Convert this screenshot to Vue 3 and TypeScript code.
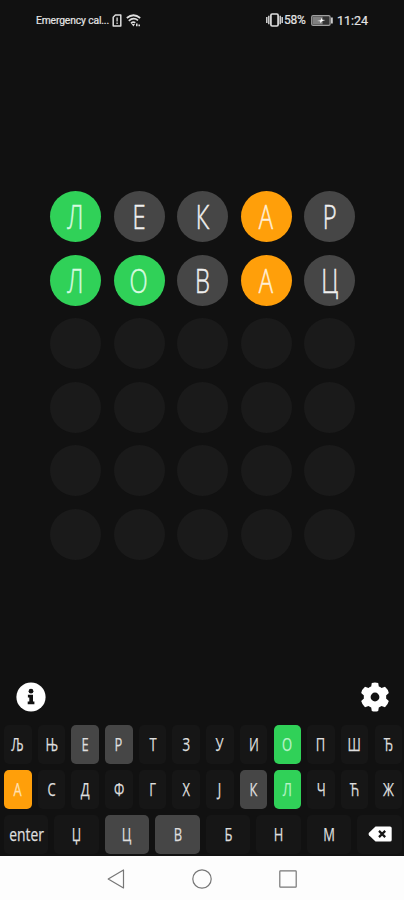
<script setup lang="ts">
type State = 'hit' | 'near' | 'miss' | 'idle'
interface Cell { ch: string; state: State }

const parse = (letters: string, marks: string): Cell[] => {
  const map: Record<string, State> = { g: 'hit', o: 'near', x: 'miss', '.': 'idle' }
  return [...letters].map((ch, i) => ({ ch: ch.trim(), state: map[marks[i]] }))
}

const board: Cell[][] = [
  parse('ЛЕКАР', 'gxxox'),
  parse('ЛОВАЦ', 'ggxox'),
  ...Array.from({ length: 4 }, () => parse('     ', '.....')),
]

const topKeys: Cell[][] = [
  parse('ЉЊЕРТЗУИОПШЂ', '..xx....g...'),
  parse('АСДФГХЈКЛЧЋЖ', 'o......xg...'),
]
const bottomKeys: Cell[] = parse('ЏЦВБНМ', '.xx...')
</script>

<template>
  <div class="phone">
    <header class="status">
      <div class="carrier">
        <span class="carrier-name">Emergency cal...</span>
        <svg class="sim" width="10" height="13" viewBox="0 0 10 13">
          <path d="M3.4 1H8.8V12H1.2V3.2Z" fill="none" stroke="#ddd" stroke-width="1.5" stroke-linejoin="round" />
          <path d="M5.1 3.6V7.4M5.1 8.6V10" stroke="#ddd" stroke-width="1.3" />
        </svg>
        <svg class="wifi" width="15" height="13" viewBox="0 0 15 13">
          <g fill="none" stroke="#ddd" stroke-width="1.7">
            <path d="M.8 4Q7.5-1.5 14.2 4" />
            <path d="M2.8 6.8Q7.5 2.8 12 6.4" />
            <path d="M5 9.3Q7.2 7.2 9.3 8.8" />
          </g>
          <path d="M5.6 10L7.4 12.4L9 10ZM10 9.4H11.6V12.3H10ZM12.4 10.4H14V12.3H12.4Z" fill="#ddd" />
        </svg>
      </div>
      <div class="system">
        <svg width="17" height="14" viewBox="0 0 17 14">
          <rect x="4.9" y="1" width="7.2" height="12" rx="1.2" fill="none" stroke="#ddd" stroke-width="1.7" />
          <path d="M2.8 2.8V11.2M14.2 2.8V11.2M.8 4V10M16.2 4V10" stroke="#ddd" stroke-width="1.4" />
        </svg>
        <span class="percent">58%</span>
        <svg class="battery" width="23" height="11" viewBox="0 0 23 11">
          <rect x=".7" y=".6" width="18.4" height="9.8" rx="1.4" fill="#333" stroke="#a0a0a0" stroke-width="1.2" />
          <rect x="1.6" y="1.6" width="10" height="7.8" fill="#808080" />
          <path d="M6 6.1L9.6 5.2L10.6 2.8L11.3 4.8L14.4 5L10.9 6.2L9.6 8.3L9.1 6.3Z" fill="#fff" />
          <path d="M20.9 2.4V8.6" stroke="#ccc" stroke-width="1.8" />
        </svg>
        <span class="clock">11:24</span>
      </div>
    </header>

    <main class="board">
      <template v-for="(row, r) in board" :key="r">
        <div v-for="(cell, c) in row" :key="c" class="tile" :class="cell.state">
          <span v-if="cell.ch" class="narrow">{{ cell.ch }}</span>
        </div>
      </template>
    </main>

    <div class="tools">
      <svg width="30" height="30" viewBox="0 0 30 30">
        <circle cx="15" cy="15" r="14.6" fill="#fff" />
        <circle cx="15" cy="9.2" r="2.4" fill="#111" />
        <path d="M11.9 12.8H17V19.4H18.4V22.2H11.7V19.4H13.3V15.5H11.9Z" fill="#111" />
      </svg>
      <svg width="30" height="30" viewBox="0 0 30 30">
        <path
          fill="#fff"
          fill-rule="evenodd"
          d="M11.8.9Q15-.1 18.2.9L18.8 4.6Q20.3 5.1 21.5 6L25 4.8Q28 7.3 28.8 10.9L26.1 13.4Q26.3 15 26.1 16.6L28.8 19.1Q28 22.7 25 25.2L21.5 24Q20.3 24.9 18.8 25.4L18.2 29.1Q15 30.1 11.8 29.1L11.2 25.4Q9.7 24.9 8.5 24L5 25.2Q2 22.7 1.2 19.1L3.9 16.6Q3.7 15 3.9 13.4L1.2 10.9Q2 7.3 5 4.8L8.5 6Q9.7 5.1 11.2 4.6ZM15 10.6A4.4 4.4 0 1 0 15 19.4A4.4 4.4 0 1 0 15 10.6Z"
        />
      </svg>
    </div>

    <section class="keyboard">
      <div v-for="(row, r) in topKeys" :key="r" class="keys twelve">
        <button v-for="key in row" :key="key.ch" class="key" :class="key.state">
          <span class="narrow">{{ key.ch }}</span>
        </button>
      </div>
      <div class="keys eight">
        <button class="key idle enter"><span class="narrow">enter</span></button>
        <button v-for="key in bottomKeys" :key="key.ch" class="key" :class="key.state">
          <span class="narrow">{{ key.ch }}</span>
        </button>
        <button class="key idle">
          <svg width="24" height="16" viewBox="0 0 24 16">
            <path d="M7.5.4H22Q23.7.4 23.7 2V14Q23.7 15.6 22 15.6H7.5L1 9.2Q0 8 1 6.8Z" fill="#fff" />
            <path d="M11 4.9L17.2 11.1M17.2 4.9L11 11.1" stroke="#151515" stroke-width="2.2" />
          </svg>
        </button>
      </div>
    </section>

    <nav class="navbar">
      <svg width="18" height="20" viewBox="0 0 18 20">
        <path d="M1.2 10L16.5 1V19Z" fill="none" stroke="#777" stroke-width="1.2" stroke-linejoin="round" />
      </svg>
      <svg width="20" height="20" viewBox="0 0 20 20">
        <circle cx="10" cy="10" r="9.2" fill="none" stroke="#777" stroke-width="1.2" />
      </svg>
      <svg width="18" height="18" viewBox="0 0 18 18">
        <rect x=".8" y=".8" width="16.4" height="16.4" rx=".6" fill="none" stroke="#777" stroke-width="1.2" />
      </svg>
    </nav>
  </div>
</template>

<style>
body {
  background: #111;
}
</style>

<style scoped>
.phone {
  width: 404px;
  height: 900px;
  display: flex;
  flex-direction: column;
  background: #111;
  color: #f0f0f0;
  overflow: hidden;
  font-family: 'Open Sans', 'Noto Sans', sans-serif;
}
.status {
  height: 40px;
  box-sizing: border-box;
  padding: 0 35px 0 36px;
  display: flex;
  align-items: center;
  justify-content: space-between;
  color: #e4e4e4;
  font-family: Roboto, sans-serif;
  white-space: nowrap;
}
.carrier,
.system {
  display: flex;
  align-items: center;
}
.carrier-name {
  width: 73px;
  font-size: 10.3px;
  letter-spacing: -0.13px;
  -webkit-text-stroke: 0.2px currentColor;
}
.sim {
  margin-left: 3px;
}
.wifi {
  margin-left: 4px;
}
.percent {
  margin-left: 1px;
  width: 24px;
  font-size: 12px;
  letter-spacing: -0.2px;
  -webkit-text-stroke: 0.2px currentColor;
}
.battery {
  margin-left: 3px;
}
.clock {
  margin-left: 3px;
  width: 32px;
  font-size: 12.5px;
  -webkit-text-stroke: 0.2px currentColor;
}
.board {
  display: grid;
  grid-template-columns: repeat(5, 51px);
  grid-auto-rows: 51px;
  gap: 12.5px;
  justify-content: center;
  padding-left: 1px;
  margin-top: 151.3px;
}
.tile {
  border-radius: 50%;
  display: flex;
  align-items: center;
  justify-content: center;
  font-size: 33px;
  line-height: 51px;
  font-weight: 300;
  -webkit-text-stroke: 0.5px currentColor;
}
.narrow {
  display: inline-block;
  transform: scaleX(0.72);
}
.idle {
  background: #1a1a1a;
}
.miss {
  background: #464646;
}
.near {
  background: #ff9f0a;
}
.hit {
  background: #30d158;
}
.tools {
  display: flex;
  justify-content: space-between;
  padding: 0 14.5px 0 16px;
  margin-top: 122.7px;
  height: 30px;
}
.keyboard {
  display: grid;
  gap: 6px;
  padding: 0 2px 0 4px;
  margin-top: 12.5px;
}
.keys {
  display: grid;
  gap: 6.2px;
}
.twelve {
  grid-template-columns: repeat(12, 27.5px);
}
.eight {
  grid-template-columns: repeat(8, 44.3px);
}
.key {
  height: 39px;
  border: 0;
  padding: 0;
  border-radius: 5px;
  display: flex;
  align-items: center;
  justify-content: center;
  color: #dedede;
  font-family: inherit;
  font-size: 18px;
  line-height: 39px;
  -webkit-text-stroke: 0.25px currentColor;
}
.key.idle {
  background: #161616;
}
.key.hit {
  background: #30d158;
  color: #b9f3c8;
}
.key.near {
  background: #ff9f0a;
  color: #ffe0b0;
}
.tile.hit {
  color: #d8fbe0;
}
.tile.near {
  color: #fff0d8;
}
.enter .narrow {
  transform: scaleX(0.77);
}
.navbar {
  flex: 1;
  margin-top: 2px;
  padding-top: 2px;
  background: #fdfdfd;
  display: flex;
  align-items: center;
  justify-content: center;
  gap: 67px;
}
</style>
